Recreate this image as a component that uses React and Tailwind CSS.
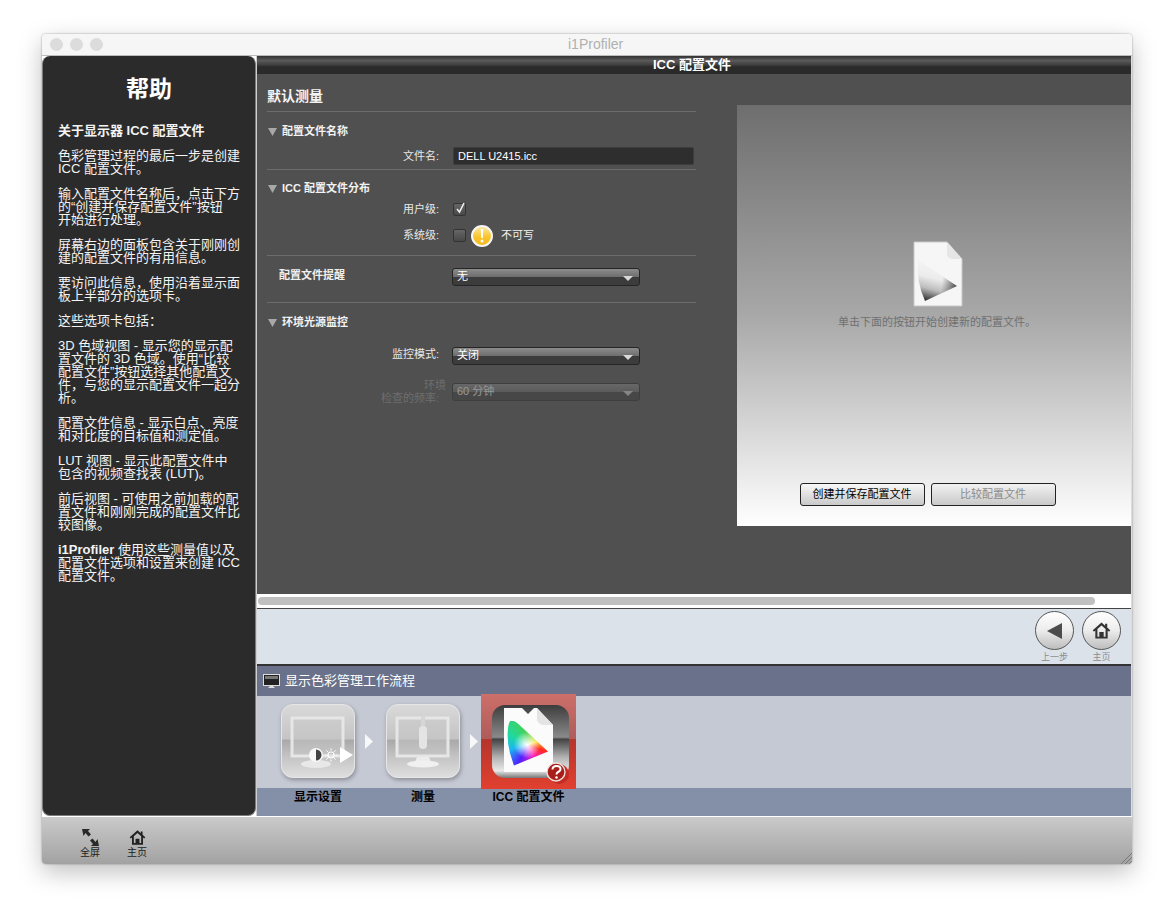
import React from "react";

const helpTexts = [
  { lines: ["关于显示器 ICC 配置文件"], bold: true },
  { lines: ["色彩管理过程的最后一步是创建", "ICC 配置文件。"] },
  { lines: ["输入配置文件名称后，点击下方", "的“创建并保存配置文件”按钮", "开始进行处理。"] },
  { lines: ["屏幕右边的面板包含关于刚刚创", "建的配置文件的有用信息。"] },
  { lines: ["要访问此信息，使用沿着显示面", "板上半部分的选项卡。"] },
  { lines: ["这些选项卡包括："] },
  {
    lines: [
      "3D 色域视图 - 显示您的显示配",
      "置文件的 3D 色域。使用“比较",
      "配置文件”按钮选择其他配置文",
      "件，与您的显示配置文件一起分",
      "析。",
    ],
  },
  { lines: ["配置文件信息 - 显示白点、亮度", "和对比度的目标值和测定值。"] },
  { lines: ["LUT 视图 - 显示此配置文件中", "包含的视频查找表 (LUT)。"] },
  { lines: ["前后视图 - 可使用之前加载的配", "置文件和刚刚完成的配置文件比", "较图像。"] },
];

const Divider = ({ className = "" }) => (
  <div className={`h-px w-[429px] bg-[#6c6c6c] ${className}`} />
);

const SectionTitle = ({ children, className = "" }) => (
  <div className={`flex h-[18px] items-center text-[11px] font-bold text-[#f2f2f2] ${className}`}>
    <svg width="9" height="9" viewBox="0 0 9 9" className="ml-[1px] mr-[5px]">
      <path d="M0 1h9L4.500 9z" fill="#a8a8a8" />
    </svg>
    {children}
  </div>
);

const FieldLabel = ({ children, className = "" }) => (
  <div className={`w-[173px] shrink-0 pr-[1px] text-right text-[11px] text-[#e8e8e8] ${className}`}>{children}</div>
);

const Select = ({ value, disabled }) => (
  <div
    className={`relative ml-[12px] h-[18px] w-[188px] overflow-hidden rounded-[3px] border border-[#252525] bg-[linear-gradient(#8c8c8c_0%,#6e6e6e_48%,#3c3c3c_50%,#3c3c3c_100%)] ${
      disabled ? "opacity-40" : ""
    }`}
  >
    <span className="absolute left-[4px] top-[-1px] text-[11px] text-white">{value}</span>
    <svg width="10" height="6" viewBox="0 0 10 6" className="absolute right-[6px] top-[7px]">
      <path d="M0 0h10L5 5z" fill="#d8d8d8" />
    </svg>
  </div>
);

const Checkbox = ({ checked }) => (
  <div className="relative ml-[13px] h-[13px] w-[13px] rounded-[2px] border border-[#333] bg-[linear-gradient(#666666,#484848)]">
    {checked && (
      <svg width="12" height="14" viewBox="0 0 12 14" className="absolute left-[1px] top-[-3px]">
        <path d="M2 8l2.500 3L9 2" fill="none" stroke="#eeeeee" strokeWidth="1.600" />
      </svg>
    )}
  </div>
);

const Gamut = () => (
  <div className="absolute left-[26px] top-[27px] h-[45px] w-[41px] bg-[conic-gradient(from_0deg_at_49%_53%,#48d048_0deg,#a8e030_40deg,#ffe020_72deg,#ff2a20_108deg,#ff20c0_150deg,#5020ff_205deg,#18b8f0_255deg,#20d8a0_300deg,#48d048_360deg)] [clip-path:path('M4_0Q8_0_13_5L41_31L7_45Q-1_25_1_8Q2_0_4_0Z')]">
    <div className="h-full w-full bg-[radial-gradient(circle_at_49%_53%,#ffffff_0%,#ffffffb0_14%,#ffffff00_42%)]" />
  </div>
);

const StepTile = ({ children }) => (
  <div className="h-[74px] w-[74px] shrink-0 rounded-[12px] border border-[#e6e6e6] bg-[linear-gradient(#d9d9d9_0%,#c4c4c4_47%,#a9a9a9_49%,#c2c2c2_70%,#dedede_100%)] shadow-[1px_2px_4px_#0000004d]">
    {children}
  </div>
);

const DisplayIcon = () => (
  <svg width="72" height="72" viewBox="0 0 72 72">
    <rect x="10" y="13" width="51" height="38" fill="#c8c8c8" fillOpacity="0.5" stroke="#e6e6e6" strokeWidth="3" />
    <ellipse cx="34" cy="59" rx="15" ry="4" fill="#e8e8e8" />
    <circle cx="34" cy="50" r="7" fill="#f8f8f8" />
    <path d="M34 44.500a5.500 5.500 0 0 1 0 11z" fill="#444" />
    <circle cx="49" cy="50" r="3" fill="none" stroke="#fff" strokeWidth="1.200" />
    <path d="M49 43.500v2M49 54.500v2M42.500 50h2M53.500 50h2M44.400 45.400l1.500 1.500M52.100 53.100l1.500 1.500M53.600 45.400l-1.500 1.500M45.900 53.100l-1.500 1.500" stroke="#fff" />
    <path d="M58 42l13 8-13 8z" fill="#fff" />
  </svg>
);

const MeasureIcon = () => (
  <svg width="72" height="72" viewBox="0 0 72 72">
    <rect x="10" y="13" width="51" height="38" fill="#c8c8c8" fillOpacity="0.5" stroke="#e6e6e6" strokeWidth="3" />
    <rect x="32" y="21" width="8" height="23" rx="4" fill="#e4e4e4" />
    <rect x="34" y="11" width="4" height="10" fill="#d6d6d6" />
    <path d="M30 52h12l2 5H28z" fill="#ececec" />
    <ellipse cx="36" cy="59" rx="16" ry="3.500" fill="#f0f0f0" />
  </svg>
);

const IccTile = () => (
  <div className="relative -my-[2px] h-[95px] w-[95px] shrink-0 bg-[linear-gradient(#cd6f6a_0%,#ae5c5a_47%,#b5352c_48%,#e1402f_100%)]">
    <svg width="95" height="95" viewBox="0 0 95 95" className="absolute left-0 top-0">
      <defs>
        <linearGradient id="iccFrame" x1="0" x2="0" y1="0" y2="1">
          <stop offset="0" stopColor="#3c3c3c" />
          <stop offset="0.44" stopColor="#8a8a8a" />
          <stop offset="0.47" stopColor="#444444" />
          <stop offset="0.72" stopColor="#b4b4b4" />
          <stop offset="0.9" stopColor="#e8e8e8" />
          <stop offset="1" stopColor="#777" />
        </linearGradient>
      </defs>
      <rect x="11" y="11" width="77" height="73" rx="13" fill="url(#iccFrame)" />
      <path d="M23 14h18l6 6 6-6h3l16 17v47H23z" fill="#fbfbfb" />
      <path d="M56 14l16 17H62q-6-1-6-7z" fill="#e4e4e4" />
    </svg>
    <Gamut />
    <svg width="26" height="26" viewBox="0 0 26 26" className="absolute left-[63px] top-[65px]">
      <circle cx="15" cy="15" r="10" fill="#c22c22" />
      <circle cx="12" cy="13" r="9" fill="#a81e18" stroke="#f0e0de" strokeWidth="1.400" />
      <path d="M8.500 10.500q0-3.500 4-3.500t4 3q0 2-2.500 3-1.500.8-1.500 2.500" fill="none" stroke="#fff" strokeWidth="2" />
      <circle cx="12.500" cy="18.500" r="1.300" fill="#fff" />
    </svg>
  </div>
);

const Arrow = ({ className = "" }) => (
  <svg width="8" height="15" viewBox="0 0 8 15" className={`shrink-0 ${className}`}>
    <path d="M0 0l8 7.500L0 15z" fill="#f8f8f8" />
  </svg>
);

const HomeIcon = ({ size = 20, fill = "#333" }) => (
  <svg width={size} height={size} viewBox="0 0 20 20">
    <path
      d="M10 1.500L.8 9.800l1.300 1.400L3.500 10v8.500h13V10l1.400 1.200 1.300-1.400-3.200-2.900V3h-2.200v1.900zM5.700 8.500L10 4.700l4.300 3.800v8h-2v-5H7.700v5h-2z"
      fill={fill}
      fillRule="evenodd"
    />
  </svg>
);

const RoundButton = ({ label, children }) => (
  <div className="flex w-[39px] flex-col items-center">
    <div className="flex h-[39px] w-[39px] items-center justify-center rounded-full border border-[#555] bg-[linear-gradient(#ffffff_0%,#ececec_50%,#bdbdbd_100%)]">
      {children}
    </div>
    <div className="mt-[1px] whitespace-nowrap text-[9px] leading-[12px] text-[#8c8c8c]">{label}</div>
  </div>
);

const App = () => {
  return (
    <div className="h-[914px] w-[1173px] overflow-hidden bg-white pl-[42px] pt-[34px] font-['Liberation_Sans','Noto_Sans_CJK_SC',sans-serif]">
      <div className="relative flex h-[830px] w-[1090px] flex-col overflow-hidden rounded-[4px] shadow-[0_8px_24px_#00000040,0_0_2px_#00000066]">
        {/* title bar */}
        <div className="flex h-[22px] shrink-0 items-center border-b border-[#bdbdbd] bg-[#f6f6f6]">
          <div className="flex gap-[7px] pl-[8px]">
            <div className="h-[13px] w-[13px] rounded-full bg-[#dcdcdc]" />
            <div className="h-[13px] w-[13px] rounded-full bg-[#dcdcdc]" />
            <div className="h-[13px] w-[13px] rounded-full bg-[#dcdcdc]" />
          </div>
          <div className="ml-[465px] text-[14px] text-[#b0b0b0]">i1Profiler</div>
        </div>

        <div className="flex min-h-0 flex-1">
          {/* help panel */}
          <div className="h-[760px] w-[214px] shrink-0 rounded-[8px] border-x border-b border-[#7c7c7c] bg-[#2b2b2b] pl-[15px] text-[13px] leading-[13px] text-[#f4f4f4]">
            <div className="h-[68px] pr-[15px] pt-[18px] text-center text-[23px] font-bold leading-[30px] text-white">
              帮助
            </div>
            {helpTexts.map((item, i) => (
              <div key={i} className={`mb-[12px] whitespace-nowrap ${item.bold ? "font-bold" : ""}`}>
                {item.lines.map((line) => (
                  <div key={line}>{line}</div>
                ))}
              </div>
            ))}
            <div className="whitespace-nowrap">
              <div>
                <span className="font-bold">i1Profiler</span> 使用这些测量值以及
              </div>
              <div>配置文件选项和设置来创建 ICC</div>
              <div>配置文件。</div>
            </div>
          </div>

          {/* right side */}
          <div className="flex min-w-0 flex-1 flex-col border-x border-l-[#cfcfcf] border-r-[#dddddd]">
            <div className="flex h-[18px] shrink-0 items-center justify-center bg-[linear-gradient(#333333_0%,#5a5a5a_25%,#3e3e3e_50%,#2a2a2a_60%,#2a2a2a_100%)] pr-[4px] text-[13px] font-bold text-white">
              ICC 配置文件
            </div>

            <div className="flex h-[520px] shrink-0 bg-[#505050] text-white">
              {/* form */}
              <div className="w-[480px] shrink-0 pl-[10px]">
                <div className="flex h-[37px] items-end pb-[6px] text-[14px] font-bold leading-[17px] text-[#f4f4f4]">
                  默认测量
                </div>
                <Divider />
                <SectionTitle className="mt-[10px]">配置文件名称</SectionTitle>
                <div className="mt-[7px] flex h-[18px] items-center">
                  <FieldLabel>文件名:</FieldLabel>
                  <div className="ml-[13px] flex h-[18px] w-[241px] items-center rounded-[2px] border border-[#3c3c3c] bg-[#2e2e2e] pl-[4px] text-[11px] text-white">
                    DELL U2415.icc
                  </div>
                </div>
                <Divider className="mt-[4px]" />
                <SectionTitle className="mt-[9px]">ICC 配置文件分布</SectionTitle>
                <div className="mt-[3px] flex h-[18px] items-center">
                  <FieldLabel>用户级:</FieldLabel>
                  <Checkbox checked />
                </div>
                <div className="mt-[8px] flex h-[18px] items-center">
                  <FieldLabel>系统级:</FieldLabel>
                  <Checkbox />
                  <svg width="24" height="24" viewBox="0 0 24 24" className="ml-[4px] mt-[2px]">
                    <defs>
                      <linearGradient id="warnFill" x1="0" x2="0" y1="0" y2="1">
                        <stop offset="0" stopColor="#fde9a8" />
                        <stop offset="0.55" stopColor="#f9c52c" />
                        <stop offset="1" stopColor="#f5b71a" />
                      </linearGradient>
                    </defs>
                    <circle cx="12" cy="12" r="10" fill="url(#warnFill)" stroke="#f6f6f6" strokeWidth="2" />
                    <path d="M10.700 5h2.600l-.5 9h-1.600z" fill="#fff" />
                    <circle cx="12" cy="17" r="1.500" fill="#fff" />
                  </svg>
                  <span className="ml-[7px] text-[11px] text-[#f0f0f0]">不可写</span>
                </div>
                <Divider className="mt-[11px]" />
                <div className="mt-[12px] flex h-[18px] items-center">
                  <div className="mb-[3px] w-[173px] shrink-0 pl-[12px] text-[11px] font-bold text-[#f0f0f0]">
                    配置文件提醒
                  </div>
                  <Select value="无" />
                </div>
                <Divider className="mt-[16px]" />
                <SectionTitle className="mt-[10px]">环境光源监控</SectionTitle>
                <div className="mt-[16px] flex h-[18px] items-center">
                  <FieldLabel className="mb-[4px]">监控模式:</FieldLabel>
                  <Select value="关闭" />
                </div>
                <div className="mt-[17px] flex h-[19px] items-center">
                  <div className="w-[173px] shrink-0 pr-[1px] text-right text-[11px] leading-[13px] text-[#6e6e6e]">
                    <div className="mr-[-7px]">环境</div>
                    <div>检查的频率:</div>
                  </div>
                  <Select value="60 分钟" disabled />
                </div>
              </div>

              {/* preview */}
              <div className="mt-[31px] flex h-[421px] w-[394px] shrink-0 flex-col items-center bg-[linear-gradient(#6e6e6e_0%,#a8a8a8_50%,#ffffff_100%)]">
                <svg width="50" height="66" viewBox="0 0 50 66" className="ml-[7px] mt-[136px]">
                  <defs>
                    <linearGradient id="grayGamut" x1="0.55" x2="0.3" y1="0" y2="1">
                      <stop offset="0" stopColor="#f6f6f6" />
                      <stop offset="0.45" stopColor="#ececec" />
                      <stop offset="0.72" stopColor="#bdbdbd" />
                      <stop offset="1" stopColor="#333333" />
                    </linearGradient>
                    <linearGradient id="grayCorner" x1="0.3" x2="1" y1="0" y2="0.1">
                      <stop offset="0" stopColor="#666666" stopOpacity="0" />
                      <stop offset="1" stopColor="#555555" />
                    </linearGradient>
                  </defs>
                  <path d="M1 1h33l15 17v47H1z" fill="#f6f6f6" stroke="#c8c8c8" />
                  <path d="M34 1l15 17H39q-5-1-5-5z" fill="#e6e6e6" />
                  <path d="M5 19L44 45 12 60Q3 40 5 19z" fill="url(#grayGamut)" />
                  <path d="M24 32L44 45 25 54z" fill="url(#grayCorner)" />
                </svg>
                <div className="ml-[6px] mt-[8px] text-[11px] leading-[14px] text-[#707070]">单击下面的按钮开始创建新的配置文件。</div>
                <div className="mr-[13px] mt-[154px] flex gap-[6px]">
                  <div className="flex h-[23px] w-[125px] items-center justify-center rounded-[3px] border border-[#222] bg-[linear-gradient(#f8f8f8,#c9c9c9)] text-[11px] text-black">
                    创建并保存配置文件
                  </div>
                  <div className="flex h-[23px] w-[125px] items-center justify-center rounded-[3px] border border-[#222] bg-[linear-gradient(#f2f2f2,#c9c9c9)] text-[11px] text-[#8c8c8c]">
                    比较配置文件
                  </div>
                </div>
              </div>
            </div>

            {/* scroll bar */}
            <div className="h-[15px] shrink-0 border-b border-[#444] bg-white pl-[1px] pt-[3px]">
              <div className="h-[8px] w-[837px] rounded-full bg-[#c0c0c0]" />
            </div>

            {/* nav */}
            <div className="flex h-[57px] shrink-0 justify-end gap-[8px] border-b-2 border-[#333] bg-[#dbe2ea] pr-[10px] pt-[2px]">
              <RoundButton label="上一步">
                <svg width="16" height="16" viewBox="0 0 16 16">
                  <path d="M15 0v16L0 8z" fill="#4c4c4c" />
                </svg>
              </RoundButton>
              <RoundButton label="主页">
                <HomeIcon size={19} />
              </RoundButton>
            </div>

            {/* workflow */}
            <div className="flex h-[30px] shrink-0 items-center bg-[#69728a] pl-[6px] text-[13px] text-white">
              <svg width="17" height="15" viewBox="0 0 17 15" className="mr-[5px]">
                <rect x="0.500" y="0.500" width="16" height="11" fill="#222" stroke="#ddd" />
                <path d="M2 2h13v3H2z" fill="#777" />
                <path d="M5 14h7l-2-2H7z" fill="#ddd" />
              </svg>
              显示色彩管理工作流程
            </div>
            <div className="flex h-[92px] shrink-0 items-center bg-[#c5c9d4] pb-[2px] pl-[24px]">
              <StepTile>
                <DisplayIcon />
              </StepTile>
              <Arrow className="ml-[10px] mr-[13px]" />
              <StepTile>
                <MeasureIcon />
              </StepTile>
              <Arrow className="ml-[10px] mr-[3px]" />
              <IccTile />
            </div>
            <div className="flex h-[28px] shrink-0 items-start bg-[#848fa8] pl-[24px] pt-[2px] text-[12px] font-bold leading-[14px] text-black">
              <div className="w-[74px] text-center">显示设置</div>
              <div className="ml-[31px] w-[74px] text-center">测量</div>
              <div className="ml-[21px] w-[95px] whitespace-nowrap text-center">ICC 配置文件</div>
            </div>
          </div>
        </div>

        {/* bottom bar */}
        <div className="relative flex h-[48px] shrink-0 items-start gap-[27px] border-t border-white bg-[linear-gradient(#cacaca,#a2a2a2)] pl-[38px] pt-[12px] text-[10px] leading-[12px] text-[#1c1c1c]">
          <div className="flex w-[20px] flex-col items-center">
            <svg width="17" height="17" viewBox="0 0 17 17">
              <path d="M0 0h8L6 2l3 3.500-2.500 2L3.500 4 1.500 7zM17 17H9l2-2-3-3.500 2.500-2 3 3.500 2-3z" fill="#2a2a2a" />
            </svg>
            <div className="mt-[1px] whitespace-nowrap">全屏</div>
          </div>
          <div className="flex w-[20px] flex-col items-center">
            <HomeIcon size={17} fill="#222" />
            <div className="mt-[1px] whitespace-nowrap">主页</div>
          </div>
          <svg width="12" height="12" viewBox="0 0 12 12" className="absolute bottom-0 right-0">
            <path d="M12 1L1 12M12 5l-7 7M12 9l-3 3" stroke="#777" />
          </svg>
        </div>
      </div>
    </div>
  );
};

export default App;
